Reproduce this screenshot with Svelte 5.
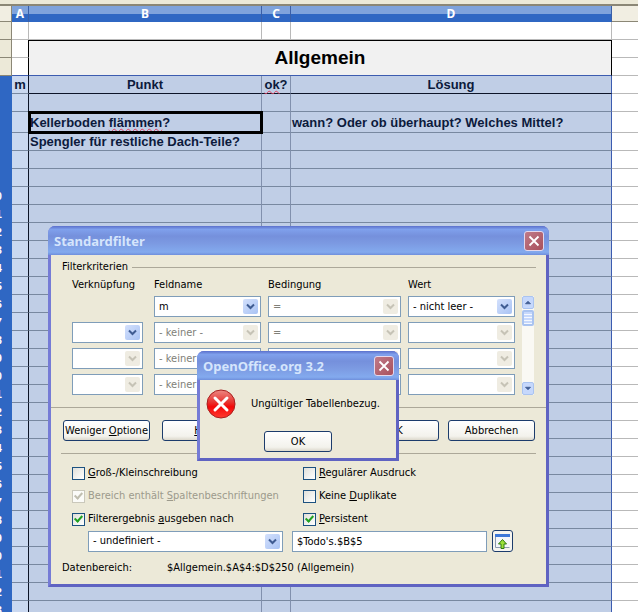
<script lang="ts">
  type Combo = { value: string; disabled: boolean };
  type Criterion = { link: Combo | null; field: Combo; condition: Combo; value: Combo };

  const off = (value = ''): Combo => ({ value, disabled: true });
  const on = (value = ''): Combo => ({ value, disabled: false });

  const criteria: Criterion[] = [
    { link: null, field: on('m'), condition: off('='), value: on('- nicht leer -') },
    { link: on(), field: off('- keiner -'), condition: off('='), value: off() },
    { link: off(), field: off('- keiner -'), condition: off('='), value: off() },
    { link: off(), field: off('- keiner -'), condition: off('='), value: off() }
  ];

  // rows 8 to 33 are empty but part of the selection
  const emptyRows = Array.from({ length: 26 }, (_, i) => i + 8);

  let target = $state("$Todo's.$B$5");
  let matchCase = $state(false);
  let regex = $state(false);
  let hasLabels = $state(true);
  let noDuplicates = $state(false);
  let copyResult = $state(true);
  let persistent = $state(true);
</script>

{#snippet combo(item: Combo, label: string)}
  <div class="combo" class:disabled={item.disabled}>
    <select aria-label={label} disabled={item.disabled}>
      <option>{item.value}</option>
    </select>
    <svg class="arrow" viewBox="0 0 15 15" aria-hidden="true">
      <path d="M4 5.5 L7.5 9 L11 5.5" />
    </svg>
  </div>
{/snippet}

{#snippet closeButton()}
  <button class="close" aria-label="Schließen">
    <svg viewBox="0 0 20 20" aria-hidden="true"><path d="M5 5 L15 15 M15 5 L5 15" /></svg>
  </button>
{/snippet}

<main>
  <div class="toolbar-edge"></div>

  <table class="sheet">
    <colgroup>
      <col class="col-num" />
      <col class="col-a" />
      <col class="col-b" />
      <col class="col-c" />
      <col class="col-d" />
      <col />
    </colgroup>
    <thead>
      <tr>
        <th class="plain"></th>
        <th>A</th>
        <th>B</th>
        <th>C</th>
        <th>D</th>
        <th class="plain"></th>
      </tr>
    </thead>
    <tbody>
      <tr class="above">
        <th></th><td></td><td></td><td></td><td></td><td></td>
      </tr>
      <tr class="above">
        <th></th><td></td><td class="title" colspan="3" rowspan="2">Allgemein</td><td></td>
      </tr>
      <tr class="above last">
        <th></th><td></td><td></td>
      </tr>
      <tr class="headings">
        <th></th><td>m</td><td>Punkt</td><td><span class="typo">ok</span>?</td><td>Lösung</td><td></td>
      </tr>
      <tr>
        <th></th><td></td><td></td><td></td><td></td><td></td>
      </tr>
      <tr class="entry tall">
        <th></th><td></td>
        <td class="cursor">Kellerboden <span class="typo">flämmen</span>?</td>
        <td></td>
        <td>wann? Oder ob überhaupt? Welches Mittel?</td>
        <td></td>
      </tr>
      <tr class="entry">
        <th></th><td></td><td>Spengler für restliche Dach-Teile?</td><td></td><td></td><td></td>
      </tr>
      {#each emptyRows as n}
        <tr>
          <th><span class="num">{n > 9 ? n : ''}</span></th><td></td><td></td><td></td><td></td><td></td>
        </tr>
      {/each}
    </tbody>
  </table>

  <section class="window filter" role="dialog" aria-label="Standardfilter">
    <header>
      <h2>Standardfilter</h2>
      {@render closeButton()}
    </header>
    <div class="body">
      <div class="legend">Filterkriterien</div>

      <div class="criteria">
        <span>Verknüpfung</span>
        <span>Feldname</span>
        <span>Bedingung</span>
        <span>Wert</span>
        <span></span>
        {#each criteria as row}
          <div class="link">
            {#if row.link}{@render combo(row.link, 'Verknüpfung')}{/if}
          </div>
          {@render combo(row.field, 'Feldname')}
          {@render combo(row.condition, 'Bedingung')}
          {@render combo(row.value, 'Wert')}
        {/each}
        <div class="scrollbar">
          <button aria-label="Nach oben"><svg viewBox="0 0 12 12"><path d="M3 7.5 L6 4.5 L9 7.5 Z" /></svg></button>
          <div class="thumb"></div>
          <button class="down" aria-label="Nach unten"><svg viewBox="0 0 12 12"><path d="M3 4.5 L6 7.5 L9 4.5 Z" /></svg></button>
        </div>
      </div>

      <div class="buttons">
        <button class="push">Weniger <u>O</u>ptione</button>
        <button class="push"><u>H</u>ilfe</button>
        <button class="push ok">OK</button>
        <button class="push">Abbrechen</button>
      </div>

      <div class="options">
        <label><input type="checkbox" bind:checked={matchCase} /><span><u>G</u>roß-/Kleinschreibung</span></label>
        <label><input type="checkbox" bind:checked={regex} /><span><u>R</u>egulärer Ausdruck</span></label>
        <label class="disabled"><input type="checkbox" bind:checked={hasLabels} disabled /><span>Bereich enthält <u>S</u>paltenbeschriftungen</span></label>
        <label><input type="checkbox" bind:checked={noDuplicates} /><span>Keine <u>D</u>uplikate</span></label>
        <label><input type="checkbox" bind:checked={copyResult} /><span>Filterergebnis <u>a</u>usgeben nach</span></label>
        <label><input type="checkbox" bind:checked={persistent} /><span><u>P</u>ersistent</span></label>
      </div>

      <div class="target">
        {@render combo(on('- undefiniert -'), 'Zielbereich')}
        <input type="text" aria-label="Zieladresse" bind:value={target} />
        <button class="shrink" aria-label="Verkleinern">
          <svg viewBox="0 0 17 17" aria-hidden="true">
            <rect x="1" y="1" width="15" height="14" fill="#f4f6fa" />
            <rect x="1" y="1" width="15" height="3" fill="#3d78d8" />
            <path d="M1.5 4 V14.5 H15.5" fill="none" stroke="#8c9aae" />
            <path d="M8.5 6.5 L12.5 11 H10 V15.5 H7 V11 H4.5 Z" fill="#9be03a" stroke="#2f7a12" />
          </svg>
        </button>
      </div>

      <div class="range">
        <span>Datenbereich:</span>
        <span>$Allgemein.$A$4:$D$250 (Allgemein)</span>
      </div>
    </div>
  </section>

  <section class="window message" role="alertdialog" aria-label="OpenOffice.org 3.2">
    <header>
      <h2>OpenOffice.org 3.2</h2>
      {@render closeButton()}
    </header>
    <div class="body">
      <div class="notice">
        <svg viewBox="0 0 30 30" aria-hidden="true">
          <defs>
            <linearGradient id="red" x1="0" y1="0" x2="0" y2="1">
              <stop offset="0" stop-color="#ec8a84" />
              <stop offset="0.45" stop-color="#e8302c" />
              <stop offset="0.6" stop-color="#f40808" />
              <stop offset="1" stop-color="#ff3a30" />
            </linearGradient>
          </defs>
          <circle cx="15" cy="15" r="14" fill="url(#red)" stroke="#a8201e" />
          <path d="M9 9 L21 21 M21 9 L9 21" stroke="#fff" stroke-width="3" stroke-linecap="round" />
        </svg>
        <p>Ungültiger Tabellenbezug.</p>
      </div>
      <button class="push">OK</button>
    </div>
  </section>
</main>

<style>
  :global(body) {
    margin: 0;
  }

  main {
    position: relative;
    height: 100vh;
    overflow: hidden;
    background: #fff;
    font-family: 'DejaVu Sans Condensed', 'Noto Sans', sans-serif;
    font-size: 11px;
    line-height: 14px;
    color: #000;
  }

  .toolbar-edge {
    box-sizing: border-box;
    height: 6px;
    background: #ece9d8;
    border-bottom: 2px solid #8b8776;
  }

  /* spreadsheet */
  .sheet {
    width: 100%;
    table-layout: fixed;
    border-collapse: separate;
    border-spacing: 0;
    font-family: 'Liberation Sans', sans-serif;
    font-size: 13px;
    font-weight: bold;
    color: #0c1a3c;
  }

  .col-num { width: 12px; }
  .col-a { width: 17px; }
  .col-b { width: 233px; }
  .col-c { width: 29px; }
  .col-d { width: 321px; }

  .sheet th,
  .sheet td {
    box-sizing: border-box;
    height: 18px;
    padding: 0;
    line-height: 16px;
    white-space: nowrap;
  }

  .sheet thead th {
    height: 16px;
    font-family: 'Noto Sans', sans-serif;
    font-size: 12px;
    color: #fff;
    border-right: 1px solid #3a5fa8;
    background: linear-gradient(#7fa3dc 0 50%, #2f67c3 50%);
  }

  .sheet thead th.plain {
    background: #f1eee2;
    border-right-color: #8b8776;
    border-bottom: 1px solid #8b8776;
  }

  .sheet thead th.plain:last-child {
    border-right: 0;
  }

  .sheet tbody th {
    overflow: hidden;
    background: #2f67c3;
    border-right: 1px solid #2f67c3;
  }

  .num {
    display: flex;
    justify-content: flex-end;
    padding-right: 9px;
    font-size: 11px;
    color: #fff;
  }

  .sheet td {
    background: #c0cee6;
    border-right: 1px solid #8190ad;
    border-bottom: 1px solid #7888a0;
  }

  .sheet .entry td {
    padding: 1px 0 0 1px;
  }

  .sheet td:nth-child(2) {
    background: #cad8f0;
    border-right-color: #0c1428;
    text-align: center;
  }

  .sheet td:nth-child(4) {
    text-align: center;
  }

  .sheet td:nth-child(5) {
    border-right-color: #3c5cb0;
  }

  .sheet td:last-child,
  .sheet .above td {
    background: #fff;
    border-color: #b9b9b9;
  }

  .sheet td:last-child {
    border-right: 0;
  }

  .sheet .above th {
    background: #ece9d8;
    border-right: 1px solid #8b8776;
    border-bottom: 1px solid #8b8776;
  }

  .sheet .above:not(:first-child) td:nth-child(2) {
    border-right-color: #000;
  }

  .sheet .above.last td:nth-child(2) {
    border-bottom-color: #3c5cb0;
  }

  .sheet .above td.title {
    background: #f1f1f1;
    border: 1px solid #000;
    border-left: 0;
    border-bottom-color: #3c5cb0;
    font-size: 19px;
    line-height: 24px;
    color: #000;
    text-align: center;
  }

  .headings td {
    text-align: center;
  }

  .sheet .headings td:nth-child(3),
  .sheet .headings td:nth-child(4),
  .sheet .headings td:nth-child(5) {
    border-bottom-color: #0c1428;
  }

  .sheet .tall td {
    height: 21px;
  }

  .sheet td.cursor {
    outline: 3px solid #000;
    outline-offset: -2px;
  }

  .typo {
    text-decoration: underline wavy #e04060 1px;
    text-underline-offset: 1px;
  }

  /* windows */
  .window {
    position: absolute;
    box-sizing: border-box;
    border: 3px solid #5f63c2;
    border-left-color: #757bd6;
    border-top: 0;
    border-radius: 7px 7px 0 0;
    background: #6c72cc;
  }

  .window header {
    display: flex;
    align-items: center;
    justify-content: space-between;
    height: 29px;
    margin: 0 -3px;
    padding: 1px 5px 0 6px;
    box-sizing: border-box;
    border-radius: 7px 7px 0 0;
    background: linear-gradient(#5b70cc 0, #7fa0ec 12%, #7590dc 35%, #7c9ae2 60%, #83aaee 90%, #6f8fdc 100%);
  }

  .window h2 {
    margin: 0;
    font-family: 'Noto Sans', sans-serif;
    font-size: 13px;
    line-height: 16px;
    font-weight: bold;
    color: #d5e5fc;
  }

  .body {
    background: #ece9d8;
  }

  .close {
    width: 20px;
    height: 20px;
    padding: 0;
    border: 1px solid #e4d8ec;
    border-radius: 3px;
    background: linear-gradient(135deg, #c07a88, #a9505c);
  }

  .close svg {
    display: block;
    width: 18px;
    height: 18px;
  }

  .close path {
    stroke: #fff;
    stroke-width: 2;
    fill: none;
  }

  .filter {
    left: 48px;
    top: 226px;
    width: 501px;
  }

  .filter .body {
    padding: 5px 0 9px;
  }

  .legend {
    display: flex;
    align-items: center;
    gap: 4px;
    margin: 0 10px 4px 11px;
  }

  .legend::after {
    content: '';
    flex: 1;
    height: 1px;
    background: #aca899;
  }

  .criteria {
    display: grid;
    grid-template-columns: 75px 107fr 133fr 107fr 12px;
    grid-template-rows: 13px;
    gap: 5px 7px;
    padding: 0 12px 12px 21px;
    border-bottom: 1px solid #aca899;
  }

  .link {
    grid-column: 1;
    width: 71px;
  }

  .combo {
    position: relative;
    height: 21px;
  }

  .combo select {
    display: block;
    width: 100%;
    height: 21px;
    padding: 0 20px 0 4px;
    box-sizing: border-box;
    appearance: none;
    border: 1px solid #7f9db9;
    border-radius: 0;
    background: #fff;
    font: inherit;
    color: #000;
    opacity: 1;
  }

  .combo.disabled select {
    color: #808078;
  }

  .arrow {
    position: absolute;
    top: 3px;
    right: 3px;
    width: 15px;
    height: 15px;
    border-radius: 2px;
    background: linear-gradient(135deg, #d3e0fc, #a9c3f4);
    pointer-events: none;
  }

  .arrow path {
    fill: none;
    stroke: #3f5c92;
    stroke-width: 2;
  }

  .disabled .arrow {
    background: #efece2;
  }

  .disabled .arrow path {
    stroke: #c6c3b6;
  }

  .scrollbar {
    grid-column: 5;
    grid-row: 2 / span 4;
    display: flex;
    flex-direction: column;
    gap: 1px;
    background: #faf9f4;
  }

  .scrollbar button,
  .thumb {
    box-sizing: border-box;
    width: 12px;
    height: 13px;
    padding: 0;
    border: 1px solid #a9c3f0;
    border-radius: 2px;
    background: #c6d8fc;
  }

  .scrollbar svg {
    display: block;
    width: 10px;
    height: 11px;
  }

  .scrollbar path {
    fill: #3f5c92;
    stroke: #3f5c92;
  }

  .scrollbar .down {
    margin-top: auto;
  }

  .thumb {
    height: 16px;
    border-width: 2px;
    background: repeating-linear-gradient(#c6d8fc 0 2px, #f4f8ff 2px 3px);
  }

  .push {
    box-sizing: border-box;
    width: 87px;
    height: 21px;
    padding: 0;
    border: 1px solid #1c3c6c;
    border-radius: 3px;
    background: linear-gradient(#fff, #f3f2ec 80%, #dcd8cc);
    font: inherit;
    color: #000;
    white-space: nowrap;
  }

  .buttons {
    display: flex;
    gap: 12px;
    margin: 0 10px;
    padding: 12px 1px 12px 2px;
    border-bottom: 1px solid #aca899;
  }

  .buttons .ok {
    margin-left: auto;
    margin-right: -3px;
  }

  .options {
    display: grid;
    grid-template-columns: 231px 1fr;
    row-gap: 9px;
    padding: 12px 10px 0 21px;
  }

  .options label {
    display: flex;
    align-items: center;
    gap: 3px;
  }

  .options label.disabled {
    color: #9c9a8c;
  }

  .options input {
    flex: none;
    display: grid;
    place-items: center;
    width: 13px;
    height: 13px;
    margin: 0;
    box-sizing: border-box;
    appearance: none;
    border: 1px solid #1c5180;
    background: linear-gradient(135deg, #e0e0da, #fff);
  }

  .options input:checked::before {
    content: '';
    width: 3px;
    height: 6px;
    margin-bottom: 2px;
    border: solid #21a121;
    border-width: 0 2px 2px 0;
    transform: rotate(42deg);
  }

  .options input:disabled {
    border-color: #cac8bb;
    background: #fbfbf8;
  }

  .options input:disabled::before {
    border-color: #c0beb0;
  }

  .target {
    display: flex;
    align-items: center;
    padding: 4px 33px 0 37px;
  }

  .target .combo,
  .target input {
    flex: 1 1 195px;
    min-width: 0;
  }

  .target input {
    height: 21px;
    margin: 0 5px 0 9px;
    padding: 0 4px;
    box-sizing: border-box;
    border: 1px solid #7f9db9;
    background: #fff;
    font: inherit;
    color: #000;
  }

  .shrink {
    width: 21px;
    height: 22px;
    padding: 1px;
    box-sizing: border-box;
    border: 1px solid #1c3c6c;
    border-radius: 3px;
    background: #f6f5f0;
  }

  .shrink svg {
    display: block;
    width: 17px;
    height: 17px;
  }

  .range {
    display: grid;
    grid-template-columns: 105px 1fr;
    padding: 9px 11px 0;
  }

  .message {
    left: 197px;
    top: 351px;
    width: 202px;
  }

  .message .body {
    padding: 9px 6px 6px;
    text-align: center;
  }

  .notice {
    display: flex;
    align-items: center;
    gap: 15px;
    margin-bottom: 12px;
  }

  .notice svg {
    width: 30px;
    height: 30px;
  }

  .notice p {
    margin: 0;
    white-space: nowrap;
  }

  .message .push {
    display: block;
    width: 68px;
    margin: 0 auto;
  }
</style>
